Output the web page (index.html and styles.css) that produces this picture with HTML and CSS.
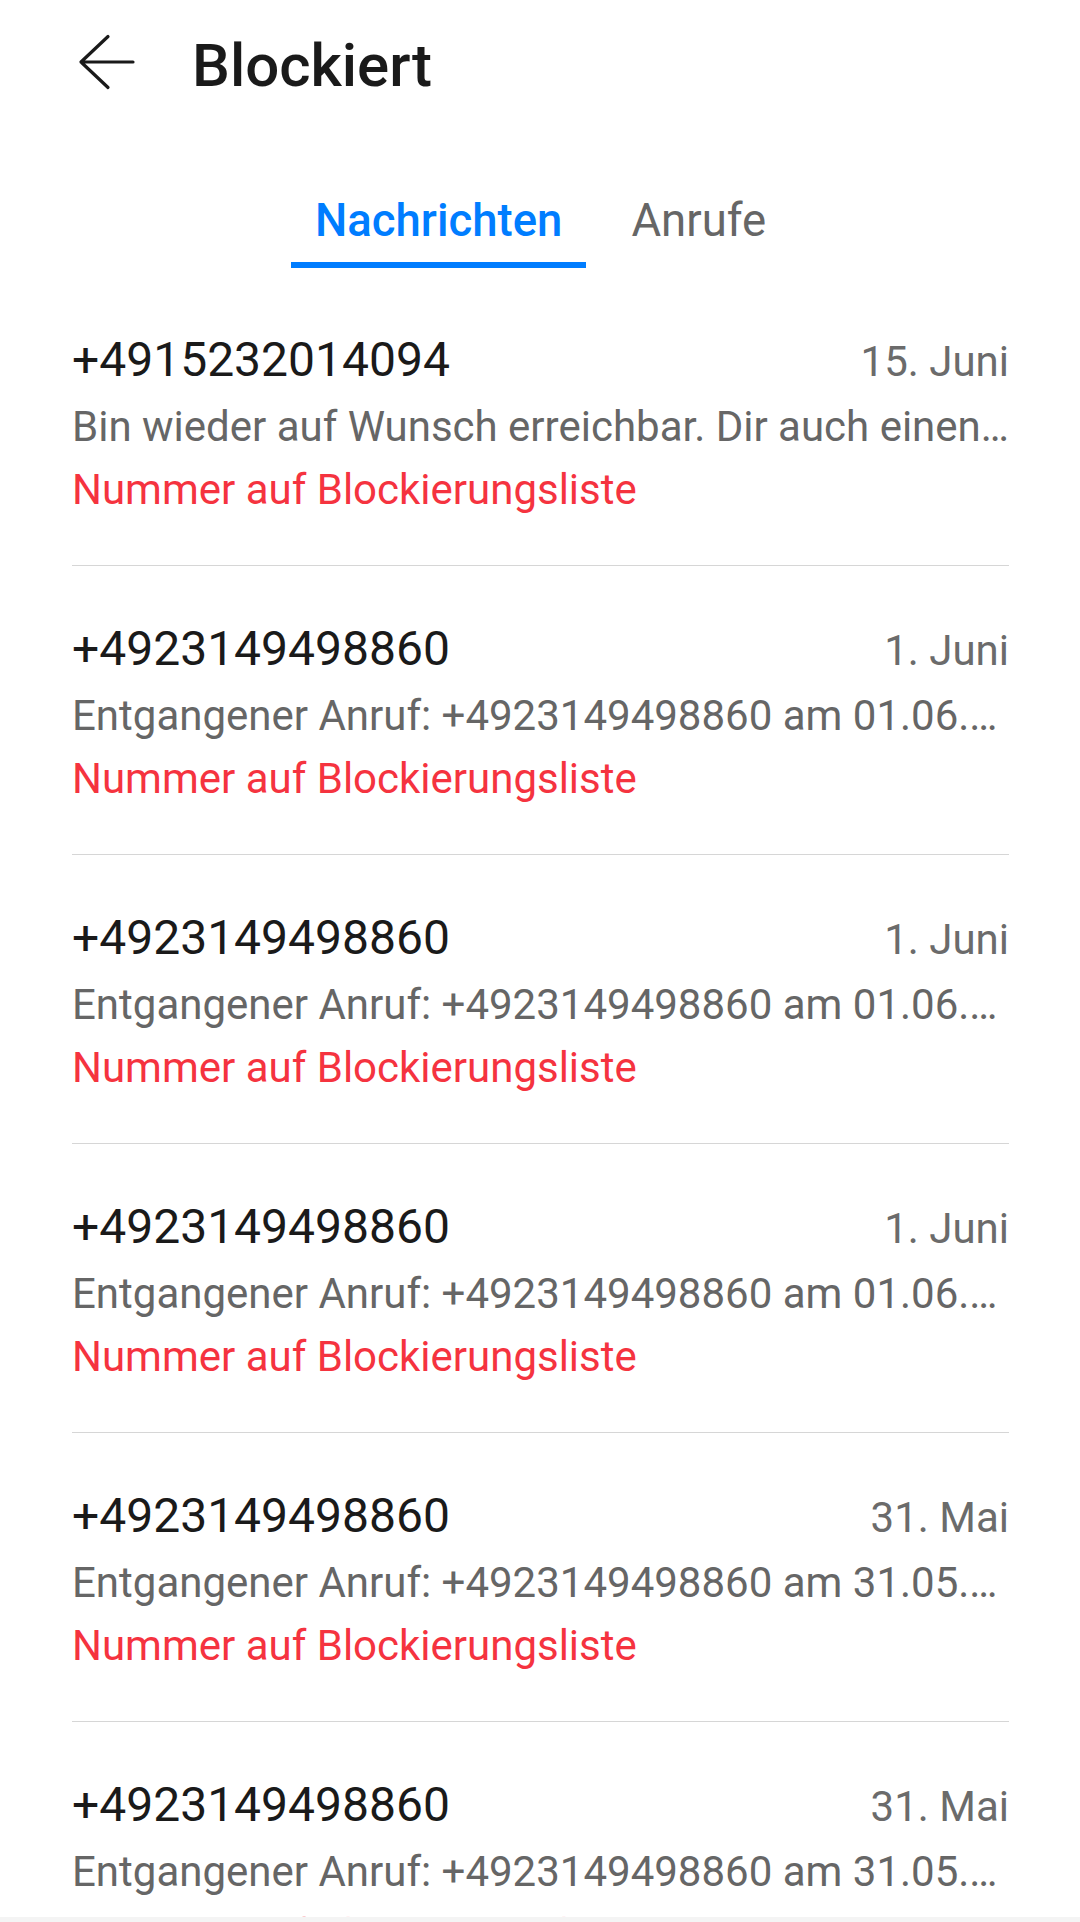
FILE: index.html
```html
<!DOCTYPE html>
<html lang="de">
<head>
<meta charset="utf-8">
<title>Blockiert</title>
<link rel="stylesheet" href="styles.css">
</head>
<body>
<div class="screen">
  <header class="header">
    <svg class="back" width="60" height="60" viewBox="0 0 60 60" aria-hidden="true">
      <path d="M4 30 H56 M31 4.5 L4 30 L31 55.5" fill="none" stroke="#1a1a1a" stroke-width="3.2" stroke-linecap="round" stroke-linejoin="round"/>
    </svg>
    <h1 class="title">Blockiert</h1>
  </header>
  <nav class="tabs">
    <div class="tab tab-active">Nachrichten</div>
    <div class="tab">Anrufe</div>
  </nav>
  <ul class="list">
    <li class="item">
      <div class="row"><span class="number">+4915232014094</span><span class="date">15. Juni</span></div>
      <div class="preview">Bin wieder auf Wunsch erreichbar. Dir auch einen…</div>
      <div class="reason">Nummer auf Blockierungsliste</div>
    </li>
    <li class="item">
      <div class="row"><span class="number">+4923149498860</span><span class="date">1. Juni</span></div>
      <div class="preview">Entgangener Anruf: +4923149498860 am 01.06.…</div>
      <div class="reason">Nummer auf Blockierungsliste</div>
    </li>
    <li class="item">
      <div class="row"><span class="number">+4923149498860</span><span class="date">1. Juni</span></div>
      <div class="preview">Entgangener Anruf: +4923149498860 am 01.06.…</div>
      <div class="reason">Nummer auf Blockierungsliste</div>
    </li>
    <li class="item">
      <div class="row"><span class="number">+4923149498860</span><span class="date">1. Juni</span></div>
      <div class="preview">Entgangener Anruf: +4923149498860 am 01.06.…</div>
      <div class="reason">Nummer auf Blockierungsliste</div>
    </li>
    <li class="item">
      <div class="row"><span class="number">+4923149498860</span><span class="date">31. Mai</span></div>
      <div class="preview">Entgangener Anruf: +4923149498860 am 31.05.…</div>
      <div class="reason">Nummer auf Blockierungsliste</div>
    </li>
    <li class="item">
      <div class="row"><span class="number">+4923149498860</span><span class="date">31. Mai</span></div>
      <div class="preview">Entgangener Anruf: +4923149498860 am 31.05.…</div>
      <div class="reason">Nummer auf Blockierungsliste</div>
    </li>
  </ul>
  <div class="navstrip"></div>
</div>
</body>
</html>
```

FILE: styles.css
```css
* { box-sizing: border-box; }
html, body {
  margin: 0;
  padding: 0;
  background: #ffffff;
}
body {
  font-family: Roboto, "Noto Sans", "Liberation Sans", sans-serif;
  color: #1a1a1a;
}
.screen {
  width: 1080px;
  height: 1922px;
  overflow: hidden;
  position: relative;
}
.header {
  height: 131px;
  display: flex;
  align-items: center;
  padding-left: 77px;
}
.back {
  flex: none;
  margin-bottom: 7px;
}
.title {
  margin: 0 0 0 55px;
  font-size: 60px;
  font-weight: 500;
  line-height: 1;
  color: #1a1a1a;
}
.tabs {
  display: flex;
  padding-top: 60px;
  padding-left: 291px;
  gap: 21px;
}
.tab {
  font-size: 45.5px;
  line-height: 60px;
  padding: 0 24px 11px;
  border-bottom: 6px solid transparent;
  color: #666666;
}
.tab-active {
  color: #007dff;
  font-weight: 500;
  border-bottom-color: #007dff;
}
.list {
  list-style: none;
  margin: 0;
  padding: 9px 71px 0 72px;
}
.item {
  padding: 48px 0 44px;
  border-bottom: 1.5px solid #d6d6d6;
}
.row {
  display: flex;
  justify-content: space-between;
  align-items: baseline;
  height: 70px;
  line-height: 70px;
}
.number {
  font-size: 48px;
  color: #1a1a1a;
}
.date {
  font-size: 42px;
  color: #6b6b6b;
}
.preview {
  font-size: 42px;
  line-height: 63px;
  color: #666666;
  white-space: nowrap;
}
.reason {
  font-size: 42px;
  line-height: 63px;
  color: #f5333f;
  white-space: nowrap;
}
.navstrip {
  position: absolute;
  left: 0;
  right: 0;
  bottom: 0;
  height: 5px;
  background: #f4f4f4;
}
```
